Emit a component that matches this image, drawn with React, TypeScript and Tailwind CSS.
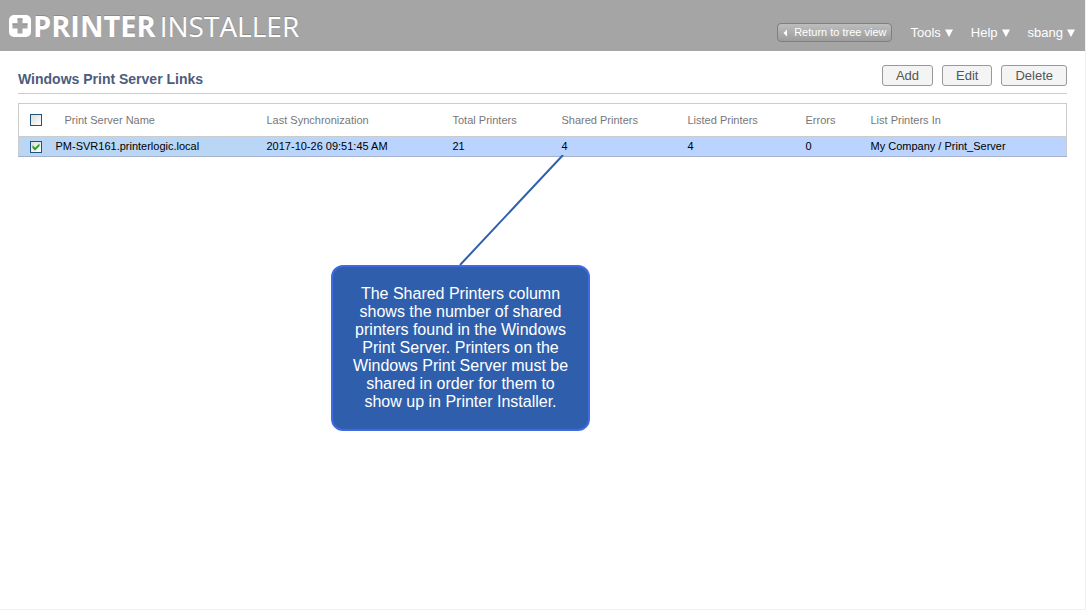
import { useState } from "react";

const columns = [
  "Last Synchronization",
  "Total Printers",
  "Shared Printers",
  "Listed Printers",
  "Errors",
  "List Printers In",
];

const servers = [
  {
    name: "PM-SVR161.printerlogic.local",
    values: ["2017-10-26 09:51:45 AM", "21", "4", "4", "0", "My Company / Print_Server"],
  },
];

const calloutLines = [
  "The Shared Printers column",
  "shows the number of shared",
  "printers found in the Windows",
  "Print Server. Printers on the",
  "Windows Print Server must be",
  "shared in order for them to",
  "show up in Printer Installer.",
];

function Checkbox({
  label,
  checked,
  onChange,
}: {
  label: string;
  checked: boolean;
  onChange: (value: boolean) => void;
}) {
  return (
    <span className="relative block size-3">
      <input
        type="checkbox"
        aria-label={label}
        checked={checked}
        onChange={(e) => onChange(e.target.checked)}
        className="block size-3 appearance-none border border-[#1d5281] bg-linear-to-br from-[#dcdcd7] to-white"
      />
      {checked && (
        <svg viewBox="0 0 12 12" className="pointer-events-none absolute inset-0 size-3" aria-hidden="true">
          <path d="M2.5 4v3L5 9.5L9.5 5V2.5L5 6.7z" fill="#21a121" />
        </svg>
      )}
    </span>
  );
}

function Logo() {
  return (
    <a href="#" className="flex items-center text-white [text-shadow:0_-1px_0_#8a8a8a]">
      <svg viewBox="0 0 24 24" className="size-6" aria-hidden="true">
        <rect x="1" y="1" width="22" height="22" rx="5" fill="#fff" />
        <path d="M9.5 4.5h5v5h5v5h-5v5h-5v-5h-5v-5h5z" fill="#a5a5a5" />
        <path d="M9.5 5h5M4.5 10h5M14.5 10h5" stroke="#8a8a8a" fill="none" />
      </svg>
      <span className="ml-px font-['Open_Sans',sans-serif] text-[29px] leading-8 font-bold">PRINTER</span>
      <span className="ml-1 font-['Open_Sans',sans-serif] text-[28px] leading-8 font-normal">INSTALLER</span>
    </a>
  );
}

export default function App() {
  const [all, setAll] = useState(false);
  const [selected, setSelected] = useState(true);

  return (
    <div className="relative min-h-screen border-r border-b border-[#f0f0f0] bg-white font-['Liberation_Sans',Arial,sans-serif]">
      <header className="flex h-[51px] items-center justify-between bg-[#a5a5a5] pr-[10px] pl-2">
        <Logo />
        <nav className="flex items-center gap-[18px] pt-[14px] text-[13px] text-white [text-shadow:0_-1px_0_#777]">
          <button className="flex h-[19px] items-center rounded border border-[#7f7f7f] bg-linear-to-b from-[#bdbdbd] to-[#9c9c9c] pr-[5px] pl-[5px] text-[11px]">
            <svg viewBox="0 0 4 8" className="mr-[7px] h-2 w-1" aria-hidden="true">
              <path d="M4 0.5v7L0.5 4z" fill="#fff" />
            </svg>
            Return to tree view
          </button>
          {["Tools", "Help", "sbang"].map((item) => (
            <button key={item} className="flex items-center gap-1">
              {item}
              <svg viewBox="0 0 8 8" className="mt-px size-2" aria-hidden="true">
                <path d="M0 0.5h8L4 8z" fill="#fff" />
              </svg>
            </button>
          ))}
        </nav>
      </header>

      <main className="px-[18px] pt-[14px]">
        <div className="flex h-[29px] items-start justify-between border-b border-[#cccccc]">
          <h1 className="pt-1 text-[14px] leading-5 font-bold text-[#4d5c7d]">Windows Print Server Links</h1>
          <div className="flex gap-[9px] text-[13px] text-[#555]">
            {["Add", "Edit", "Delete"].map((action) => (
              <button
                key={action}
                className="h-[21px] rounded-[3px] border border-[#999] bg-[#f4f4f4] px-[13px] leading-[17px]"
              >
                {action}
              </button>
            ))}
          </div>
        </div>

        <table className="mt-[9px] w-full table-fixed border-collapse border border-[#cccccc] text-left text-[11px]">
          <colgroup>
            <col className="w-[37px]" />
            <col className="w-[211px]" />
            <col className="w-[186px]" />
            <col className="w-[109px]" />
            <col className="w-[126px]" />
            <col className="w-[118px]" />
            <col className="w-[65px]" />
            <col />
          </colgroup>
          <thead>
            <tr className="h-[33px] text-[#777]">
              <th scope="col" className="pl-[11px]">
                <Checkbox label="Select all print servers" checked={all} onChange={setAll} />
              </th>
              <th scope="col" className="pl-[9px] font-normal">Print Server Name</th>
              {columns.map((column) => (
                <th key={column} scope="col" className="font-normal">{column}</th>
              ))}
            </tr>
          </thead>
          <tbody>
            {servers.map((server) => (
              <tr
                key={server.name}
                className="h-5 border-t border-b border-t-[#cccccc] border-b-[#a5b1cc] bg-linear-to-r from-[#bad6f5] from-20% to-[#bad4ff] to-35% text-black"
              >
                <td className="pl-[11px]">
                  <Checkbox label={"Select " + server.name} checked={selected} onChange={setSelected} />
                </td>
                <td>{server.name}</td>
                {server.values.map((value, i) => (
                  <td key={columns[i]}>{value}</td>
                ))}
              </tr>
            ))}
          </tbody>
        </table>
      </main>

      <aside className="absolute top-[155px] left-[331px] w-[259px]">
        <svg viewBox="0 0 259 110" className="block h-[110px] w-full" aria-hidden="true">
          <path d="M232 0 L129 110" stroke="#2f5fac" strokeWidth="2" />
        </svg>
        <p className="rounded-xl border-2 border-[#4169e1] bg-[#2f5fac] pt-[18px] pb-[18px] text-center text-[16px] leading-[18px] whitespace-nowrap text-white">
          {calloutLines.map((line) => (
            <span key={line} className="block">{line}</span>
          ))}
        </p>
      </aside>
    </div>
  );
}
